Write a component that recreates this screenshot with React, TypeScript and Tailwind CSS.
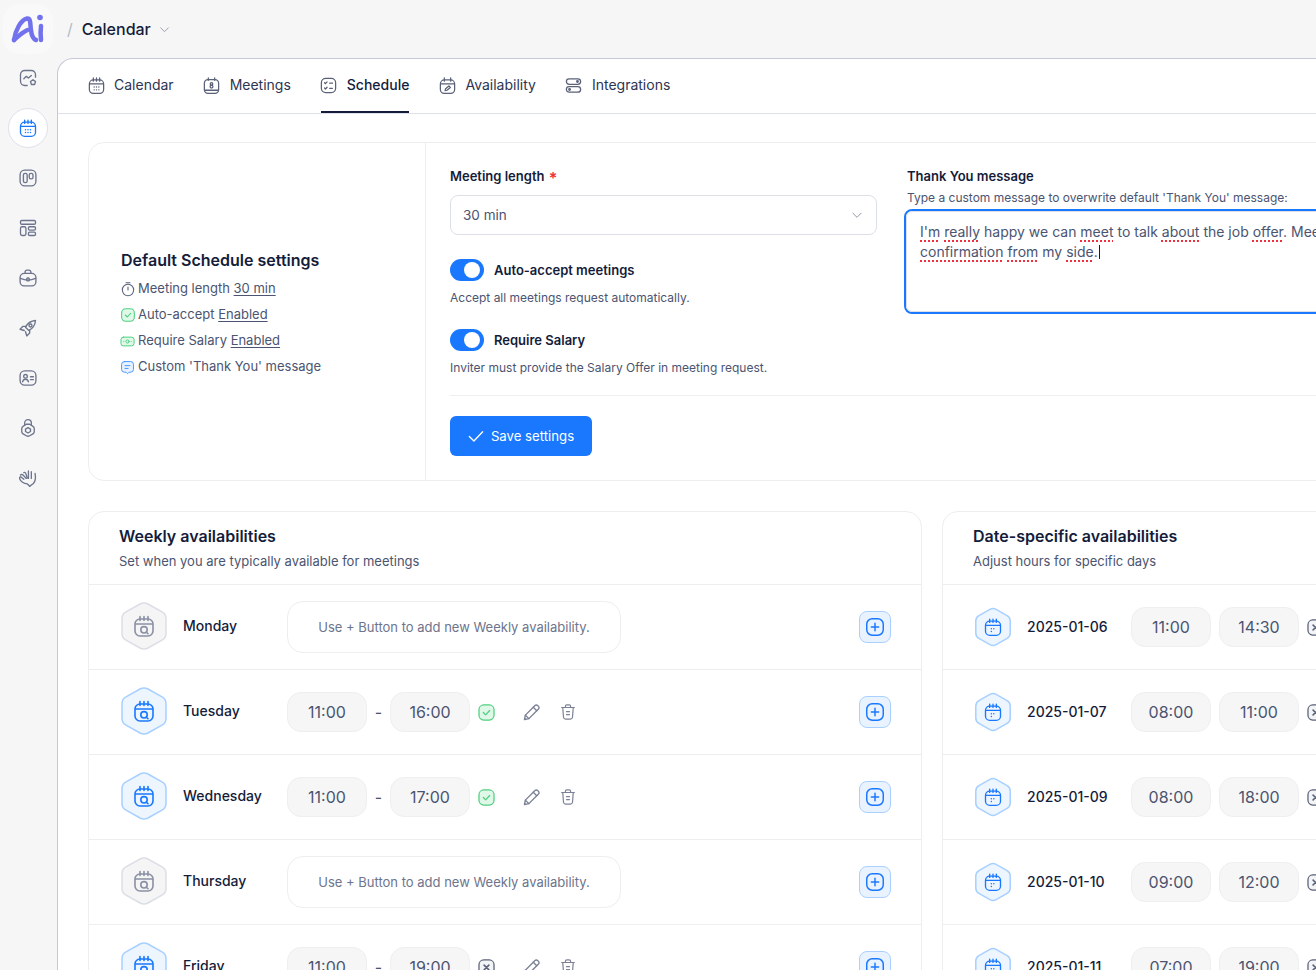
import type { ReactNode } from 'react'

const INK = 'text-[#141c3a]'
const BODY = 'text-[#4b5470]'

type IconProps = { size?: number; className?: string; children?: ReactNode }

function Svg({ size = 18, className = '', children }: IconProps) {
  return (
    <svg
      width={size}
      height={size}
      viewBox="0 0 24 24"
      fill="none"
      stroke="currentColor"
      strokeWidth={1.6}
      strokeLinecap="round"
      strokeLinejoin="round"
      className={`shrink-0 ${className}`}
    >
      {children}
    </svg>
  )
}

// Calendar base shared by most of the nav + tab icons
function CalendarDots(props: IconProps) {
  return (
    <Svg {...props}>
      <rect x="3" y="5" width="18" height="17" rx="5" />
      <path d="M3.5 10h17M8 2.5v4M12 2.5v4M16 2.5v4" />
      <path d="M9 14h.01M12 14h.01M15 14h.01M9 17.5h.01M12 17.5h.01M15 17.5h.01" strokeWidth={1.8} />
    </Svg>
  )
}

function CalendarSearch(props: IconProps) {
  return (
    <Svg {...props}>
      <rect x="3" y="5" width="18" height="17" rx="5" />
      <path d="M3.5 10h17M8 2.5v4M12 2.5v4M16 2.5v4" />
      <circle cx="12" cy="15.8" r="3.2" />
      <path d="M14.4 18.2l1.6 1.6" />
    </Svg>
  )
}

function CalendarSmall(props: IconProps) {
  return (
    <Svg {...props}>
      <rect x="3" y="5" width="18" height="17" rx="5" />
      <path d="M3.5 10h17M8 2.5v4M12 2.5v4M16 2.5v4" />
      <path d="M10 14h.01M13 14h.01M10 17.5h.01" strokeWidth={1.8} />
    </Svg>
  )
}

function CalendarPen(props: IconProps) {
  return (
    <Svg {...props}>
      <rect x="3" y="5" width="18" height="17" rx="5" />
      <path d="M3.5 10h17M8 2.5v4M16 2.5v4" />
      <path d="M9 18.5l.6-2.4 4.2-3.6 1.8 1.9-4.2 3.6z" />
    </Svg>
  )
}

function NumberedCalendar(props: IconProps) {
  return (
    <Svg {...props}>
      <rect x="3" y="4.5" width="18" height="17.5" rx="4.5" />
      <path d="M8 2.5v3M16 2.5v3M3.5 18h17" />
      <circle cx="12" cy="10" r="1.6" />
      <circle cx="12" cy="13.4" r="1.8" />
    </Svg>
  )
}

function Checklist(props: IconProps) {
  return (
    <Svg {...props}>
      <rect x="3" y="3" width="18" height="18" rx="5.5" />
      <path d="M7 8.5l1.2 1.2L10.2 7.5M13.5 9H17M7 15.2l1.2 1.2 2-2.2M13.5 15.5H17" />
    </Svg>
  )
}

function Toggles(props: IconProps) {
  return (
    <Svg {...props}>
      <rect x="3" y="3.5" width="18" height="7" rx="3.5" />
      <rect x="3" y="13.5" width="18" height="7" rx="3.5" />
      <circle cx="17" cy="7" r="1" />
      <circle cx="7" cy="17" r="1" />
    </Svg>
  )
}

function ChartStar(props: IconProps) {
  return (
    <Svg {...props}>
      <path d="M11 21H8a5 5 0 0 1-5-5V8a5 5 0 0 1 5-5h8a5 5 0 0 1 5 5v3" />
      <path d="M7 13l3-3 2.5 2L16 9" />
      <path d="M18 14l3 2.2-1.1 3.6h-3.8L15 16.2z" />
    </Svg>
  )
}

function Kanban(props: IconProps) {
  return (
    <Svg {...props}>
      <rect x="2.5" y="2.5" width="19" height="19" rx="5.5" />
      <rect x="6.5" y="6.5" width="4.5" height="11" rx="2" />
      <rect x="13.5" y="6.5" width="4.5" height="6.5" rx="2" />
    </Svg>
  )
}

function LayoutRows(props: IconProps) {
  return (
    <Svg {...props}>
      <rect x="3" y="3" width="18" height="4.5" rx="1.5" />
      <rect x="3" y="10.5" width="6.5" height="10.5" rx="2" />
      <rect x="12.5" y="10.5" width="8.5" height="4" rx="1.5" />
      <rect x="12.5" y="17" width="8.5" height="4" rx="1.5" />
    </Svg>
  )
}

function Briefcase(props: IconProps) {
  return (
    <Svg {...props}>
      <rect x="2.5" y="6.5" width="19" height="15" rx="5" />
      <path d="M8.5 6.5V5a2.5 2.5 0 0 1 2.5-2.5h2A2.5 2.5 0 0 1 15.5 5v1.5" />
      <path d="M3 12.5c5.5 2.5 12.5 2.5 18 0" />
      <rect x="10.5" y="12" width="3" height="3.5" rx="1" />
    </Svg>
  )
}

function Rocket(props: IconProps) {
  return (
    <Svg {...props}>
      <path d="M9 11c2.5-5 6.5-7.5 12-8-.5 5.5-3 9.5-8 12z" />
      <circle cx="15" cy="9" r="1.8" />
      <path d="M9.5 10H6L2.5 13.5l5 1.5M14 14.5V18l-3.5 3.5L9 16.5" />
    </Svg>
  )
}

function IdCard(props: IconProps) {
  return (
    <Svg {...props}>
      <rect x="2.5" y="3.5" width="19" height="17" rx="5.5" />
      <circle cx="9" cy="10" r="2.2" />
      <path d="M5.5 16.5c.5-2 2-3 3.5-3s3 1 3.5 3M15 10.5h3.5M15 14h3.5" />
    </Svg>
  )
}

function Kettlebell(props: IconProps) {
  return (
    <Svg {...props}>
      <path d="M8 8.5V6a4 4 0 0 1 8 0v2.5" />
      <path d="M10 7.5h4l4 2.5c.8.5 1.5 1.5 1.5 2.5v4c0 1-.6 2-1.5 2.5l-4 2.3a4 4 0 0 1-4 0L6 19c-.9-.5-1.5-1.5-1.5-2.5v-4c0-1 .7-2 1.5-2.5z" />
      <path d="M12 11.5l3 1.8v2.9l-3 1.8-3-1.8v-2.9z" />
    </Svg>
  )
}

function HandIcon(props: IconProps) {
  return (
    <Svg {...props}>
      <path d="M14 22l-3-3c-4 0-8-3-9-6-.5-2 1-3 2-2l3 2.5" />
      <path d="M3 8.5c1-1 2-1 3 0l4 4M7 5.5c1-.7 2 0 2.3 1l2 5.5" />
      <path d="M12.5 3.5v9M16 4.5v8M20.5 6.5c1 6 0 10-2 12L14 22" />
    </Svg>
  )
}

function Timer(props: IconProps) {
  return (
    <Svg {...props}>
      <circle cx="12" cy="13.5" r="8.5" />
      <path d="M9 2.5h6M12 9v4.5" />
    </Svg>
  )
}

function CheckBadge({ size = 19 }: { size?: number }) {
  return (
    <Svg size={size} className="text-[#4fd080]">
      <rect x="2.5" y="2.5" width="19" height="19" rx="6" fill="#dff8e8" />
      <path d="M8 12l3 3 5-5.5" />
    </Svg>
  )
}

function MoneyBadge() {
  return (
    <Svg size={15} className="text-[#4fd080]">
      <rect x="1.5" y="5" width="21" height="14" rx="4" fill="#dff8e8" />
      <circle cx="12" cy="12" r="2.5" />
      <path d="M6 12h.01M18 12h.01" />
    </Svg>
  )
}

function MessageBadge() {
  return (
    <Svg size={15} className="text-[#4a97ff]">
      <path
        d="M7 2.5h10a4.5 4.5 0 0 1 4.5 4.5v8a4.5 4.5 0 0 1-4.5 4.5h-2.5L12 22l-2.5-2.5H7A4.5 4.5 0 0 1 2.5 15V7A4.5 4.5 0 0 1 7 2.5z"
        fill="#e8f2ff"
      />
      <path d="M8 9h8M8 13.5h5" />
    </Svg>
  )
}

function Pencil() {
  return (
    <Svg size={21} className="-m-[2px] text-[#7c8296]">
      <path d="M4 20l1-5L16 4a2.1 2.1 0 0 1 3 0l1 1a2.1 2.1 0 0 1 0 3L9 19z" />
      <path d="M14 6l4 4M5 15l4 4" />
    </Svg>
  )
}

function Trash() {
  return (
    <Svg size={18} className="-m-px text-[#7c8296]">
      <path d="M3.5 6h17M8.5 6V4.5a2 2 0 0 1 2-2h3a2 2 0 0 1 2 2V6" />
      <path d="M5 6l1 13a3 3 0 0 0 3 2.5h6a3 3 0 0 0 3-2.5l1-13" />
      <path d="M10 11.5h4M10 15.5h4" />
    </Svg>
  )
}

function CrossBadge() {
  return (
    <Svg size={19} className="text-[#5a6178]">
      <rect x="2.5" y="2.5" width="19" height="19" rx="6" fill="#f3f4f6" />
      <path d="M9 9l6 6M15 9l-6 6" strokeWidth={2} />
    </Svg>
  )
}

function Chevron({ size = 14 }: { size?: number }) {
  return (
    <Svg size={size} className="text-[#8b91a5]">
      <path d="M5 9l7 7 7-7" />
    </Svg>
  )
}

function Hexagon({ active, small }: { active: boolean; small?: boolean }) {
  const fill = active ? '#edf5ff' : '#f5f5f6'
  const stroke = active ? '#a8d0ff' : '#dcdee6'
  return (
    <div className={`relative flex shrink-0 items-center justify-center ${small ? 'h-[40px] w-[36px]' : 'mb-[2px] h-[50px] w-[46px]'}`}>
      <svg viewBox="0 0 46 50" preserveAspectRatio="none" className="absolute inset-0 h-full w-full">
        <path
          d="M19 3Q23 1 27 3L41 10.8Q45 13 45 17.5L45 32.5Q45 37 41 39.2L27 47Q23 49 19 47L5 39.2Q1 37 1 32.5L1 17.5Q1 13 5 10.8Z"
          fill={fill}
          stroke={stroke}
          strokeWidth={1.5}
          vectorEffect="non-scaling-stroke"
        />
      </svg>
      <span className={`relative ${active ? 'text-[#1a78ff]' : 'text-[#8b91a5]'}`}>
        {small ? <CalendarSmall size={20} /> : <CalendarSearch size={24} />}
      </span>
    </div>
  )
}

function AddButton() {
  return (
    <button
      type="button"
      className="flex h-8 w-8 shrink-0 items-center justify-center rounded-lg border border-[#a9d0ff] bg-[#e9f3ff] text-[#1a78ff]"
    >
      <Svg size={22}>
        <rect x="3" y="3" width="18" height="18" rx="6" />
        <path d="M12 8v8M8 12h8" />
      </Svg>
    </button>
  )
}

function TimeBox({ value }: { value: string }) {
  return (
    <div className={`flex h-10 w-20 shrink-0 items-center justify-center rounded-[14px] border border-[#efeff1] bg-[#f6f6f7] text-base ${BODY}`}>
      {value}
    </div>
  )
}

function Toggle() {
  return (
    <span className="flex h-[22px] w-[34px] items-center justify-end rounded-full bg-[#1a78ff] pr-[4px]">
      <span className="h-4 w-4 rounded-full bg-white" />
    </span>
  )
}

const TABS = [
  { label: 'Calendar', Icon: CalendarDots },
  { label: 'Meetings', Icon: NumberedCalendar },
  { label: 'Schedule', Icon: Checklist, active: true },
  { label: 'Availability', Icon: CalendarPen },
  { label: 'Integrations', Icon: Toggles },
]

const NAV = [ChartStar, CalendarDots, Kanban, LayoutRows, Briefcase, Rocket, IdCard, Kettlebell, HandIcon]

type WeeklyRow = { day: string; from?: string; to?: string; on?: boolean }

const WEEKLY: WeeklyRow[] = [
  { day: 'Monday' },
  { day: 'Tuesday', from: '11:00', to: '16:00', on: true },
  { day: 'Wednesday', from: '11:00', to: '17:00', on: true },
  { day: 'Thursday' },
  { day: 'Friday', from: '11:00', to: '19:00', on: false },
]

const DATES = [
  ['2025-01-06', '11:00', '14:30'],
  ['2025-01-07', '08:00', '11:00'],
  ['2025-01-09', '08:00', '18:00'],
  ['2025-01-10', '09:00', '12:00'],
  ['2025-01-11', '07:00', '19:00'],
]

function Sidebar() {
  return (
    <aside className="flex w-[57px] shrink-0 flex-col items-center pr-px">
      <div className="mt-1 h-[50px] w-[50px] rounded-2xl bg-[#f9f9fa]">
        <svg width="50" height="50" viewBox="3 4 50 50" fill="none" stroke="#7272ee" strokeLinecap="round" strokeLinejoin="round">
          <path d="M14 40C15 31 21 19.5 27 18.5C31 18 30 24 31 30C31.5 35 33 39 36 40" strokeWidth="4.5" />
          <path d="M14 40C18 36.5 22 32.5 27.5 30" strokeWidth="4.5" />
          <path d="M41 26C40.5 30 40.5 35 41 40" strokeWidth="4.5" />
          <circle cx="40" cy="17.5" r="2.8" fill="#7272ee" stroke="none" />
        </svg>
      </div>
      <nav className="-mt-px flex flex-col items-center">
        {NAV.map((Icon, index) => (
          <div key={index} className="flex h-[50px] w-[50px] items-center justify-center">
            {index === 1 ? (
              <span className="flex h-10 w-10 items-center justify-center rounded-full border border-[#dfe1ea] bg-white text-[#1a78ff]">
                <Icon size={20} />
              </span>
            ) : (
              <span className="text-[#6d748c]">
                <Icon size={20} />
              </span>
            )}
          </div>
        ))}
      </nav>
    </aside>
  )
}

function SummaryLine({ icon, children }: { icon: ReactNode; children: ReactNode }) {
  return (
    <li className={`flex h-[26px] items-center gap-[4px] text-[13px] ${BODY}`}>
      <span className="flex w-[13px] justify-center">{icon}</span>
      <span>{children}</span>
    </li>
  )
}

function SettingsCard() {
  return (
    <section className="flex h-[339px] w-[1400px] rounded-2xl border border-[#eeeef0]">
      <div className="flex w-[337px] shrink-0 flex-col justify-center border-r border-[#eeeef0] pt-[5px] pl-8">
        <h2 className={`text-base font-semibold ${INK}`}>Default Schedule settings</h2>
        <ul className="mt-[4px]">
          <SummaryLine icon={<Timer size={16} className="text-[#5a6178]" />}>
            Meeting length <span className="underline underline-offset-2">30 min</span>
          </SummaryLine>
          <SummaryLine icon={<CheckBadge size={16} />}>
            Auto-accept <span className="underline underline-offset-2">Enabled</span>
          </SummaryLine>
          <SummaryLine icon={<MoneyBadge />}>
            Require Salary <span className="underline underline-offset-2">Enabled</span>
          </SummaryLine>
          <SummaryLine icon={<MessageBadge />}>Custom 'Thank You' message</SummaryLine>
        </ul>
      </div>
      <div className="min-w-0 flex-1 pl-6">
        <div className="flex h-[253px] border-b border-[#eeeef0] pt-[23px]">
          <div className="w-[427px] shrink-0">
            <label className={`block text-[13px] leading-5 font-semibold ${INK}`}>
              Meeting length <span className="relative top-[3px] ml-px text-[16px] leading-none text-[#f0303c]">*</span>
            </label>
            <div className={`mt-[9px] flex h-10 items-center justify-between rounded-lg border border-[#dcdee8] px-3 text-[13.5px] ${BODY}`}>
              30 min
              <Chevron />
            </div>
            <div className="mt-6 flex items-center gap-[10px]">
              <Toggle />
              <span className={`pt-[2px] text-[13px] font-semibold ${INK}`}>Auto-accept meetings</span>
            </div>
            <p className={`mt-2 text-xs leading-[18px] ${BODY}`}>Accept all meetings request automatically.</p>
            <div className="mt-[22px] flex items-center gap-[10px]">
              <Toggle />
              <span className={`pt-[2px] text-[13px] font-semibold ${INK}`}>Require Salary</span>
            </div>
            <p className={`mt-2 text-xs leading-[18px] ${BODY}`}>Inviter must provide the Salary Offer in meeting request.</p>
          </div>
          <div className="ml-[27px] min-w-0 flex-1">
            <label className={`ml-[3px] block text-[13px] leading-5 font-semibold ${INK}`}>Thank You message</label>
            <p className={`mt-[3px] ml-[3px] text-xs leading-[18px] ${BODY}`}>
              Type a custom message to overwrite default 'Thank You' message:
            </p>
            <div className="mt-[2px] h-[105px] rounded-lg border-2 border-[#1a78ff]">
              <div className={`h-full rounded-md border border-[#dcdee8] pt-[10px] pl-[13px] text-sm leading-5 whitespace-nowrap ${BODY}`}>
                <Spell>I'm</Spell> <Spell>really</Spell> happy we can <Spell>meet</Spell> to talk <Spell>about</Spell> the job{' '}
                <Spell>offer</Spell>. Meeting
                <br />
                <Spell>confirmation</Spell> <Spell>from</Spell> my <Spell>side</Spell>.
                <span className="ml-px inline-block h-[14px] w-px align-[-2px] bg-[#141c3a]" />
              </div>
            </div>
          </div>
        </div>
        <button
          type="button"
          className="mt-5 flex h-10 w-[142px] items-center justify-center gap-[5px] rounded-md bg-[#1a78ff] pr-[2px] text-[13.2px] text-white"
        >
          <Svg size={20} className="text-white">
            <path d="M4 12.5l5.5 5.5L20 7" />
          </Svg>
          <span className="pt-px">Save settings</span>
        </button>
      </div>
    </section>
  )
}

function Spell({ children }: { children: ReactNode }) {
  return (
    <span className="underline decoration-[#f0303c] decoration-dotted decoration-[1.5px] underline-offset-[3px]">{children}</span>
  )
}

function WeeklyCard() {
  return (
    <section className="w-[834px] shrink-0 rounded-t-2xl border border-[#eeeef0]">
      <header className="h-[73px] border-b border-[#eeeef0] px-[30px] pt-[12px]">
        <h2 className={`text-base leading-6 font-semibold ${INK}`}>Weekly availabilities</h2>
        <p className={`mt-[3px] text-[13px] leading-5 ${BODY}`}>Set when you are typically available for meetings</p>
      </header>
      {WEEKLY.map((row) => (
        <div key={row.day} className="flex h-[85px] items-center border-b border-[#eeeef0] pr-[30px] pl-[32px]">
          <Hexagon active={row.from != null} />
          <span className={`ml-4 mb-[2px] w-[104px] shrink-0 text-sm font-medium ${INK}`}>{row.day}</span>
          {row.from ? (
            <>
              <TimeBox value={row.from} />
              <span className={`w-[23px] text-center text-base ${BODY}`}>-</span>
              <TimeBox value={row.to ?? ''} />
              <span className="ml-[7px] flex w-[19px] justify-center">{row.on ? <CheckBadge /> : <CrossBadge />}</span>
              <span className="ml-[27px]">
                <Pencil />
              </span>
              <span className="ml-[20px]">
                <Trash />
              </span>
            </>
          ) : (
            <div className="flex h-[52px] w-[334px] items-center justify-center rounded-2xl border border-[#eeeef0] pt-px text-[13px] text-[#6d748c]">
              Use + Button to add new Weekly availability.
            </div>
          )}
          <span className="ml-auto">
            <AddButton />
          </span>
        </div>
      ))}
    </section>
  )
}

function DatesCard() {
  return (
    <section className="w-[500px] shrink-0 rounded-t-2xl border border-[#eeeef0]">
      <header className="h-[73px] border-b border-[#eeeef0] px-[30px] pt-[12px]">
        <h2 className={`text-base leading-6 font-semibold ${INK}`}>Date-specific availabilities</h2>
        <p className={`mt-[3px] text-[13px] leading-5 ${BODY}`}>Adjust hours for specific days</p>
      </header>
      {DATES.map(([date, from, to]) => (
        <div key={date} className="flex h-[85px] items-center border-b border-[#eeeef0] pl-[32px]">
          <Hexagon active small />
          <span className={`ml-[16px] w-[104px] shrink-0 text-sm font-medium ${INK}`}>{date}</span>
          <TimeBox value={from} />
          <span className="ml-2">
            <TimeBox value={to} />
          </span>
          <span className="ml-[7px]">
            <CrossBadge />
          </span>
        </div>
      ))}
    </section>
  )
}

export default function App() {
  return (
    <div className="flex h-[970px] w-[1316px] overflow-hidden bg-[#f6f6f7] font-['Inter',sans-serif]">
      <Sidebar />
      <div className="flex min-w-0 flex-1 flex-col">
        <header className="flex h-[58px] shrink-0 items-center">
          <span className="ml-[10px] text-base text-[#b6bac8]">/</span>
          <span className={`ml-[9px] text-base font-medium ${INK}`}>Calendar</span>
          <span className="ml-[7px]">
            <Chevron size={13} />
          </span>
        </header>
        <main className="min-h-0 flex-1 overflow-hidden rounded-tl-2xl border-t border-l border-[#c5c8d8] bg-white">
          <div className="flex h-[55px] items-stretch gap-[30px] border-b border-[#dfe1ea] pl-[30px]">
            {TABS.map(({ label, Icon, active }) => (
              <div
                key={label}
                className={`flex items-center gap-[10px] border-b-2 text-sm ${
                  active ? 'border-[#141c3a] font-medium text-[#141c3a]' : 'border-transparent text-[#2d3552]'
                }`}
              >
                <span className="-m-[1.5px] text-[#5a6178]">
                  <Icon size={19} />
                </span>
                {label}
              </div>
            ))}
          </div>
          <div className="px-[30px] pt-[28px]">
            <SettingsCard />
            <div className="mt-[30px] flex gap-[20px]">
              <WeeklyCard />
              <DatesCard />
            </div>
          </div>
        </main>
      </div>
    </div>
  )
}
